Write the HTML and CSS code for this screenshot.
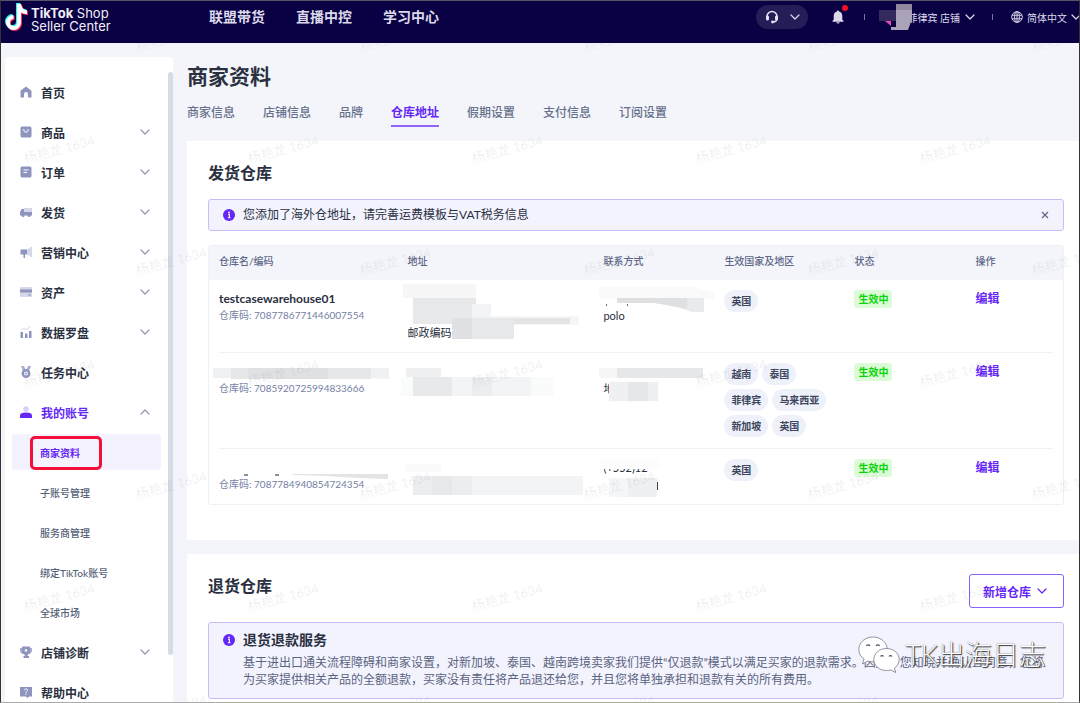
FILE: index.html
```
<!DOCTYPE html>
<html lang="zh-CN">
<head>
    <meta charset="UTF-8">
    <meta name="viewport" content="width=device-width, initial-scale=1.0">
    <title>TikTok Shop Seller Center</title>
    <link rel="stylesheet" href="styles.css">
</head>
<body>

<!-- 图标 -->
<svg class="sprite" aria-hidden="true">
    <symbol id="down" viewBox="0 0 10 10"><path d="M1 3l4 4 4-4" fill="none" stroke="currentColor" stroke-width="1.2" stroke-linecap="round" stroke-linejoin="round"/></symbol>
    <symbol id="up" viewBox="0 0 10 10"><path d="M1 7l4-4 4 4" fill="none" stroke="currentColor" stroke-width="1.2" stroke-linecap="round" stroke-linejoin="round"/></symbol>
    <symbol id="info" viewBox="0 0 12 12"><circle cx="6" cy="6" r="6" fill="#6527f5"/><circle cx="6" cy="3.4" r=".9" fill="#fff"/><path d="M5 5.3h1.4v3.4M4.8 8.8h2.7" fill="none" stroke="#fff" stroke-width="1.1"/></symbol>
    <symbol id="tune" viewBox="0 0 24 30"><path d="M14 1v18.5a5.500 5.500 0 1 1-5.500-5.500M14 1c.5 5 3.500 8 8 8.200" fill="none" stroke="currentColor" stroke-width="4"/></symbol>
</svg>

<header class="topbar">
    <a class="logo" href="#">
        <svg class="note" viewBox="0 0 24 30" aria-hidden="true">
            <use href="#tune" x="-1" y="-1" width="24" height="30" color="#25f4ee"/>
            <use href="#tune" x="1" y="1" width="24" height="30" color="#fe2c55"/>
            <use href="#tune" width="24" height="30" color="#fff"/>
        </svg>
        <span><b>TikTok</b> Shop<br>Seller Center</span>
    </a>
    <nav class="topnav">
        <a href="#">联盟带货</a>
        <a href="#">直播中控</a>
        <a href="#">学习中心</a>
    </nav>
    <div class="tools">
        <button class="support" aria-label="客服">
            <svg width="14" height="14" viewBox="0 0 14 14"><path d="M2 8V6.500a5 5 0 0 1 10 0V8c0 2.500-1.500 4-4 4" fill="none" stroke="#e6e4f3" stroke-width="1.500"/><rect x="1" y="5.800" width="3" height="4.600" rx="1.300" fill="#e6e4f3"/><rect x="10" y="5.800" width="3" height="4.600" rx="1.300" fill="#e6e4f3"/><circle cx="7.500" cy="12" r="1.400" fill="#e6e4f3"/></svg>
            <svg class="chevron"><use href="#down"/></svg>
        </button>
        <button class="bell" aria-label="通知">
            <svg width="12" height="14" viewBox="0 0 12 14"><path d="M6 .5c.7 0 1 .4 1 1C9 2 10.300 3.500 10.300 6v3.500L11.500 11v.7H.5V11l1.200-1.500V6C1.700 3.500 3 2 5 1.500c0-.6.3-1 1-1zM4.300 12.300h3.400a1.700 1.200 0 0 1-3.400 0z" fill="#dcdaea"/></svg>
            <i class="dot"></i>
        </button>
        <i class="line"></i>
        <button class="shop">
            <svg class="avatar" width="34" height="28" viewBox="0 0 34 28" aria-hidden="true"><path d="M0 7h17v11H0z" fill="#332a5e"/><path d="M6 18h6v5z" fill="#e34bb5"/><path d="M17 1h16v15l-4 11H12v-3h5z" fill="#aaa3b9"/><path d="M17 1h16v6H17z" fill="#92899e"/></svg>
            菲律宾 店铺
            <svg class="chevron"><use href="#down"/></svg>
        </button>
        <i class="line"></i>
        <button class="lang">
            <svg width="12" height="12" viewBox="0 0 12 12"><g fill="none" stroke="#d5d2e6"><circle cx="6" cy="6" r="5.300"/><ellipse cx="6" cy="6" rx="2.400" ry="5.300"/><path d="M1 4.200h10M1 7.800h10M6 .7v10.600"/></g></svg>
            简体中文
            <svg class="chevron"><use href="#down"/></svg>
        </button>
    </div>
</header>

<div class="page">
    <!-- 侧边栏 -->
    <aside class="sidebar">
        <nav>
            <a class="item" href="#"><svg class="icon" viewBox="0 0 12 12"><path d="M6 .5l5.500 4.300V11.500H8V8a2 2 0 0 0-4 0v3.500H.5V4.800z" fill="#8f94bf"/></svg>首页</a>
            <a class="item" href="#"><svg class="icon" viewBox="0 0 12 12"><rect x=".5" y=".5" width="11" height="11" rx="1.500" fill="#8f94bf"/><path d="M3.800 3v1a2.200 2.200 0 0 0 4.400 0V3" fill="none" stroke="#fff"/></svg>商品<svg class="chevron"><use href="#down"/></svg></a>
            <a class="item" href="#"><svg class="icon" viewBox="0 0 12 12"><rect x=".5" y=".5" width="11" height="11" rx="1.500" fill="#8f94bf"/><path d="M3.500 4h5M3.500 6.500h3.500" stroke="#fff"/></svg>订单<svg class="chevron"><use href="#down"/></svg></a>
            <a class="item" href="#"><svg class="icon" viewBox="0 0 12 12"><path d="M4 2h8v5H4z" fill="#d4d8e9"/><path d="M0 6l1.500-3H4v3h8v3.500H0z" fill="#8f94bf"/><circle cx="3" cy="9.500" r="1.500" fill="#8f94bf"/><circle cx="9" cy="9.500" r="1.500" fill="#8f94bf"/></svg>发货<svg class="chevron"><use href="#down"/></svg></a>
            <a class="item" href="#"><svg class="icon" viewBox="0 0 12 12"><path d="M7 3.500L12 .5v11l-5-3z" fill="#d4d8e9"/><path d="M.5 3.500H7v5H5V12H3.500V8.500h-3z" fill="#8f94bf"/></svg>营销中心<svg class="chevron"><use href="#down"/></svg></a>
            <a class="item" href="#"><svg class="icon" viewBox="0 0 12 12"><rect y="1" width="12" height="10" rx="1" fill="#d4d8e9"/><path d="M0 3.500h12v3H0zM8 8.500h3v1H8z" fill="#8f94bf"/></svg>资产<svg class="chevron"><use href="#down"/></svg></a>
            <a class="item" href="#"><svg class="icon" viewBox="0 0 12 12"><path d="M.5 6H3v6H.5zM5 7.500h2.500V12H5zM9 5h2.500v7H9z" fill="#8f94bf"/><path d="M1 4l3-1.500 2.500 1L10.500.8" fill="none" stroke="#d4d8e9"/></svg>数据罗盘<svg class="chevron"><use href="#down"/></svg></a>
            <a class="item" href="#"><svg class="icon" viewBox="0 0 12 12"><path d="M1 0h3l1.500 3.500h1L8 0h3L9 5H3z" fill="#a9aed0"/><circle cx="6" cy="7.500" r="3.200" fill="none" stroke="#8f94bf" stroke-width="2.500"/><circle cx="6" cy="7.500" r="1" fill="#8f94bf"/></svg>任务中心</a>
            <a class="item open" href="#"><svg class="icon" viewBox="0 0 12 12"><circle cx="6" cy="3" r="2.800" fill="#d9cffb"/><path d="M0 12V9.500C0 7.500 2 6.500 6 6.500s6 1 6 3V12z" fill="#6527f5"/></svg>我的账号<svg class="chevron"><use href="#up"/></svg></a>
            <a class="sub active" href="#">商家资料<i class="mark"></i></a>
            <a class="sub" href="#">子账号管理</a>
            <a class="sub" href="#">服务商管理</a>
            <a class="sub" href="#">绑定TikTok账号</a>
            <a class="sub" href="#">全球市场</a>
            <a class="item" href="#"><svg class="icon" viewBox="0 0 12 12"><path d="M0 2h12v3.500L10 8H2L0 5.500z" fill="#a9aed0"/><path d="M2 .5h8v6L7.500 9v1H9v2H3.500v-2h1.300V9L2 6.500z" fill="#8f94bf"/><circle cx="6" cy="4.500" r="1.400" fill="#e8eaf4"/></svg>店铺诊断<svg class="chevron"><use href="#down"/></svg></a>
            <a class="item" href="#"><svg class="icon" viewBox="0 0 12 12"><path d="M0 1h12v9.500H9L7.500 12 6 10.500H0z" fill="#8f94bf"/><path d="M4.500 4.300c0-2 3-2 3 0 0 1.200-1.500 1-1.500 2.400M6 7.600v1.200" fill="none" stroke="#fff"/></svg>帮助中心</a>
        </nav>
        <div class="scrollbar"></div>
    </aside>

    <main>
        <h1>商家资料</h1>
        <nav class="tabs">
            <a href="#">商家信息</a>
            <a href="#">店铺信息</a>
            <a href="#">品牌</a>
            <a class="active" href="#">仓库地址</a>
            <a href="#">假期设置</a>
            <a href="#">支付信息</a>
            <a href="#">订阅设置</a>
        </nav>

        <!-- 发货仓库 -->
        <section class="card">
            <h2>发货仓库</h2>
            <div class="notice">
                <svg class="info"><use href="#info"/></svg>
                <p>您添加了海外仓地址，请完善运费模板与VAT税务信息</p>
                <button class="close" aria-label="关闭"><svg width="8" height="8" viewBox="0 0 8 8"><path d="M1 1l6 6M7 1L1 7" stroke="#5d6484" stroke-width="1.200"/></svg></button>
            </div>
            <div class="table-box">
                <table>
                    <thead>
                        <tr>
                            <th class="c-name">仓库名/编码</th>
                            <th class="c-addr">地址</th>
                            <th class="c-contact">联系方式</th>
                            <th class="c-area">生效国家及地区</th>
                            <th class="c-state">状态</th>
                            <th>操作</th>
                        </tr>
                    </thead>
                    <tbody>
                        <tr>
                            <td><strong>testcasewarehouse01</strong><small>仓库码: 7087786771446007554</small></td>
                            <td><br><br>邮政编码</td>
                            <td><br>polo</td>
                            <td><div class="tags"><span>英国</span></div></td>
                            <td><span class="state">生效中</span></td>
                            <td><a class="edit" href="#">编辑</a></td>
                        </tr>
                        <tr>
                            <td><strong>&nbsp;</strong><small>仓库码: 7085920725994833666</small></td>
                            <td></td>
                            <td><br>地</td>
                            <td><div class="tags"><span>越南</span><span>泰国</span><span>菲律宾</span><span>马来西亚</span><span>新加坡</span><span>英国</span></div></td>
                            <td><span class="state">生效中</span></td>
                            <td><a class="edit" href="#">编辑</a></td>
                        </tr>
                        <tr>
                            <td><strong>&nbsp;</strong><small>仓库码: 7087784940854724354</small></td>
                            <td></td>
                            <td>(+552)12</td>
                            <td><div class="tags"><span>英国</span></div></td>
                            <td><span class="state">生效中</span></td>
                            <td><a class="edit" href="#">编辑</a></td>
                        </tr>
                    </tbody>
                </table>
                <!-- 隐私信息打码 -->
                <svg class="mosaic" width="520" height="260" viewBox="0 0 520 260" aria-hidden="true">
                    <path d="M194 38h73v14h-73z" fill="#f7f7f8"/>
                    <path d="M204 52h63v6h-63z" fill="#e6e7e8"/>
                    <path d="M204 58h78v14h-78z" fill="#f2f3f4"/>
                    <path d="M204 58h59v20h-59z" fill="#e8e9ea"/>
                    <path d="M282 70h88v9h-88z" fill="#f5f6f6"/>
                    <path d="M263 72h98v6h-98z" fill="#e3e4e5"/>
                    <path d="M243 72h62v21h-62z" fill="#e6e8e9"/>
                    <path d="M243 72h20v21h-20z" fill="#dfe1e3"/>
                    <path d="M390 41h95l20 6v6H390z" fill="#fafafb"/>
                    <path d="M408 52h87v14h-12l-15-5-22-4h-38z" fill="#e9eaeb"/>
                    <path d="M408 52h70v11l-10-2-22-4h-38z" fill="#dfe0e2"/>
                    <path d="M397 58h1v2h-1zM418 58h1v2h-1z" fill="#6b7080"/>
                    <path d="M4 122h176v11l-20-1H4z" fill="#f0f1f2"/>
                    <path d="M22 122h140v11H22z" fill="#e6e7e9"/>
                    <path d="M39 122h80v11H39z" fill="#e0e1e3"/>
                    <path d="M197 122h35v9h-35z" fill="#eff0f1"/>
                    <path d="M192 131h153v19H192z" fill="#fafbfb"/>
                    <path d="M204 131h118v19H204z" fill="#f3f4f5"/>
                    <path d="M204 131h39v19h-39z" fill="#e8e9eb"/>
                    <path d="M263 131h20v19h-20z" fill="#ebedee"/>
                    <path d="M390 122h18v10h-18z" fill="#f7f7f8"/>
                    <path d="M408 122h86v10h-86z" fill="#e6e7e9"/>
                    <path d="M400 133h50v23h-50z" fill="#fdfdfe"/>
                    <path d="M400 136h49v19h-49z" fill="#eff0f2"/>
                    <path d="M419 136h20v19h-20z" fill="#e6e7e9"/>
                    <path d="M84 228h95v5l-30-1-32-2-33-1z" fill="#e3e4e6"/>
                    <path d="M35 228h4v2h-4zM66 228h4v2h-4z" fill="#8a8f9d"/>
                    <path d="M196 218h36v8h-36z" fill="#fafafb"/>
                    <path d="M204 230h170v19H204z" fill="#f3f4f5"/>
                    <path d="M204 230h59v19h-59z" fill="#ebedef"/>
                    <path d="M223 230h20v19h-20z" fill="#e6e8ea"/>
                    <path d="M392 212h60v11h-60z" fill="#fdfdfe"/>
                    <path d="M400 232h48v19h-48z" fill="#f5f6f7"/>
                    <path d="M419 232h29v19h-29z" fill="#eff0f1"/>
                    <path d="M448 236h1v8h-1z" fill="#3d4252"/>
                </svg>
            </div>
        </section>

        <!-- 退货仓库 -->
        <section class="card">
            <div class="card-head">
                <h2>退货仓库</h2>
                <button class="add">新增仓库<svg class="chevron"><use href="#down"/></svg></button>
            </div>
            <div class="notice tall">
                <svg class="info"><use href="#info"/></svg>
                <div>
                    <h3>退货退款服务</h3>
                    <p>基于进出口通关流程障碍和商家设置，对新加坡、泰国、越南跨境卖家我们提供“仅退款”模式以满足买家的退款需求。因此，您知晓并确认且同意，您将为买家提供相关产品的全额退款，买家没有责任将产品退还给您，并且您将单独承担和退款有关的所有费用。</p>
                </div>
            </div>
        </section>
    </main>
</div>

<!-- 水印 -->
<div class="watermark" aria-hidden="true">
    <div class="odd"><span>杨艳龙 1634</span><span>杨艳龙 1634</span><span>杨艳龙 1634</span><span>杨艳龙 1634</span><span>杨艳龙 1634</span></div>
    <div><span>杨艳龙 1634</span><span>杨艳龙 1634</span><span>杨艳龙 1634</span><span>杨艳龙 1634</span><span>杨艳龙 1634</span></div>
    <div class="odd"><span>杨艳龙 1634</span><span>杨艳龙 1634</span><span>杨艳龙 1634</span><span>杨艳龙 1634</span><span>杨艳龙 1634</span></div>
    <div><span>杨艳龙 1634</span><span>杨艳龙 1634</span><span>杨艳龙 1634</span><span>杨艳龙 1634</span><span>杨艳龙 1634</span></div>
    <div class="odd"><span>杨艳龙 1634</span><span>杨艳龙 1634</span><span>杨艳龙 1634</span><span>杨艳龙 1634</span><span>杨艳龙 1634</span></div>
    <div><span>杨艳龙 1634</span><span>杨艳龙 1634</span><span>杨艳龙 1634</span><span>杨艳龙 1634</span><span>杨艳龙 1634</span></div>
    <div class="odd"><span>杨艳龙 1634</span><span>杨艳龙 1634</span><span>杨艳龙 1634</span><span>杨艳龙 1634</span><span>杨艳龙 1634</span></div>
</div>

<div class="account">
    <svg width="42" height="38" viewBox="0 0 42 38" aria-hidden="true">
        <g fill="#fff" stroke="#777b88" stroke-width=".8">
            <path d="M15 1C7 1 .8 6.500.8 13.500c0 4 2 7.200 5.200 9.500l-1.500 5 5.500-3c1.500.5 3.200.8 5 .8 8 0 14.200-5.300 14.200-12.300S23 1 15 1z"/>
            <path d="M28.500 12.500c-7.200 0-12.700 4.800-12.700 11s5.500 11 12.700 11c1.600 0 3-.2 4.300-.6l5 2.700-1.400-4.400c2.900-2 4.800-5.200 4.800-8.700 0-6.200-5.500-11-12.700-11z"/>
        </g>
        <g fill="none" stroke="#555a68" stroke-width="1.200"><path d="M8.500 10a2 2 0 0 1 3.600 0M18 10a2 2 0 0 1 3.600 0M22.500 20.500a1.700 1.700 0 0 1 3 0M31 20.500a1.700 1.700 0 0 1 3 0"/></g>
    </svg>
    <span>TK出海日志</span>
</div>

</body>
</html>
```
FILE: styles.css
```
* {
    box-sizing: border-box;
}
body {
    display: flex;
    flex-direction: column;
    position: relative;
    height: 100vh;
    margin: 0;
    overflow: hidden;
    border: 1px solid #333;
    border-top-color: #55556a;
    border-bottom-color: #aaa;
    background: #f4f5fa;
    color: #2a3040;
    font-family: Lato, "Noto Sans CJK SC", sans-serif;
    font-size: 12px;
}
h1, h2, h3, p {
    margin: 0;
}
a {
    color: inherit;
    text-decoration: none;
}
button {
    display: flex;
    align-items: center;
    padding: 0;
    border: none;
    background: none;
    color: inherit;
    font: inherit;
    cursor: pointer;
}
.sprite {
    display: none;
}
.chevron {
    flex: none;
    width: 10px;
    height: 10px;
}

/* 顶部导航 */
.topbar {
    display: flex;
    flex: none;
    height: 42px;
    padding-left: 4px;
    background: #0a0044;
    color: #dcdaea;
}
.logo {
    display: flex;
    flex: none;
    gap: 2px;
    width: 204px;
    padding-top: 2px;
    color: #f0eff6;
    font-family: Inter, sans-serif;
    font-size: 13px;
    line-height: 13px;
}
.logo span {
    padding-top: 4px;
}
.note {
    width: 24px;
    height: 30px;
    overflow: visible;
}
.topnav {
    display: flex;
    gap: 31px;
    font-size: 14px;
    font-weight: 700;
    line-height: 32px;
}
.tools {
    display: flex;
    align-items: center;
    height: 32px;
    margin-left: auto;
    font-size: 10px;
    white-space: nowrap;
}
.support {
    gap: 11px;
    height: 24px;
    margin-right: 24px;
    padding: 0 8px 0 9px;
    border-radius: 12px;
    background: #251d58;
}
.bell {
    position: relative;
    margin-right: 20px;
}
.dot {
    position: absolute;
    top: -5px;
    right: -4px;
    width: 6px;
    height: 6px;
    border-radius: 50%;
    background: #f01022;
}
.line {
    width: 1px;
    height: 6px;
    background: #7a7599;
}
.shop {
    position: relative;
    gap: 5px;
    margin: 0 17px 0 42px;
}
.avatar {
    position: absolute;
    top: -7px;
    left: -28px;
}
.lang {
    gap: 4px;
    margin-left: 18px;
}
.lang .chevron {
    margin-right: -2px;
}

.page {
    display: flex;
    flex: 1;
    gap: 14px;
    min-height: 0;
    padding-left: 4px;
}

/* 侧边栏 */
.sidebar {
    display: flex;
    flex: none;
    width: 168px;
    margin-top: 14px;
    padding-top: 15px;
    border-radius: 4px 4px 0 0;
    background: #fff;
}
.sidebar nav {
    flex: 1;
    padding: 0 7px;
}
.item, .sub {
    display: flex;
    align-items: center;
    height: 40px;
}
.item {
    padding: 0 11px 0 8px;
    font-weight: 700;
}
.icon {
    width: 12px;
    height: 12px;
    margin-right: 9px;
}
.item .chevron {
    margin-left: auto;
    color: #8f98b3;
}
.item.open {
    color: #6527f5;
}
.sub {
    position: relative;
    height: 36px;
    margin: 2px 0;
    padding-left: 28px;
    border-radius: 3px;
    color: #565f78;
    font-size: 10px;
    font-weight: 500;
}
.sub.active {
    background: #f3f2fd;
    color: #6527f5;
    font-weight: 700;
}
.sub + .sub {
    margin-top: 4px;
}
.mark {
    position: absolute;
    top: 2px;
    left: 18px;
    width: 72px;
    height: 34px;
    border: 3px solid #f5103c;
    border-radius: 5px;
}
.scrollbar {
    width: 5px;
    height: 583px;
    border-radius: 3px;
    background: #d5dce7;
}

/* 内容 */
main {
    flex: 1;
    min-width: 0;
    padding-top: 19px;
}
h1 {
    font-size: 21px;
    font-weight: 700;
    line-height: 28px;
}
.tabs {
    display: flex;
    gap: 28px;
    margin: 11px 0 14px;
    color: #66708c;
    font-weight: 500;
    line-height: 24px;
}
.tabs a {
    border-bottom: 2px solid transparent;
}
.tabs .active {
    border-color: #9065f7;
    color: #6527f5;
    font-weight: 700;
}
.card {
    margin-bottom: 14px;
    padding: 20px 15px 35px 21px;
    background: #fff;
}
h2 {
    font-size: 16px;
    font-weight: 700;
    line-height: 24px;
}
.card-head {
    display: flex;
    align-items: flex-start;
    justify-content: space-between;
}
.add {
    gap: 6px;
    height: 34px;
    padding: 0 16px 0 13px;
    border: 1px solid #8c62f6;
    border-radius: 3px;
    color: #6527f5;
    font-weight: 700;
}
.notice {
    display: flex;
    align-items: center;
    gap: 8px;
    margin-top: 14px;
    padding: 6px 14px;
    border: 1px solid #c8bdfa;
    border-radius: 3px;
    background: #f3f3fe;
    line-height: 18px;
}
.info {
    flex: none;
    width: 12px;
    height: 12px;
}
.close {
    margin-left: auto;
}
.tall {
    align-items: flex-start;
    padding: 7px 10px 10px 14px;
}
.tall .info {
    margin-top: 4px;
}
.tall p {
    margin-top: 4px;
    color: #5a6380;
    line-height: 17px;
}
h3 {
    font-size: 14px;
    font-weight: 700;
    line-height: 20px;
}

/* 仓库列表 */
.table-box {
    position: relative;
    margin-top: 14px;
    padding: 0 10px;
    overflow: hidden;
    border: 1px solid #edf1f8;
    border-radius: 3px;
}
table {
    width: 100%;
    border-collapse: collapse;
    table-layout: fixed;
    line-height: 17px;
}
th {
    height: 34px;
    padding: 0 0 3px;
    background: #f4f5fa;
    color: #5d6787;
    font-size: 10px;
    font-weight: 500;
    text-align: left;
}
th:first-child {
    box-shadow: -10px 0 #f4f5fa;
}
th:last-child {
    box-shadow: 10px 0 #f4f5fa;
}
.c-name {
    width: 22.6%;
}
.c-addr {
    width: 23.5%;
}
.c-contact {
    width: 14.5%;
}
.c-area {
    width: 15.6%;
}
.c-state {
    width: 14.5%;
}
td {
    padding: 10px 0 11px;
    border-bottom: 1px solid #edf1f8;
    font-size: 11px;
    vertical-align: top;
}
tr:last-child td {
    border-bottom: none;
}
td strong, td small {
    display: block;
}
td strong {
    font-size: 12px;
}
td small {
    color: #7580a3;
    font-size: 10px;
}
.tags {
    display: flex;
    flex-wrap: wrap;
    gap: 4px;
    padding-right: 18px;
}
.tags span {
    padding: 0 7px;
    border-radius: 11px;
    background: #eef1fa;
    color: #3f475e;
    font-size: 10px;
    font-weight: 700;
    line-height: 22px;
}
.state {
    display: inline-block;
    padding: 0 4px;
    border-radius: 3px;
    background: #dcfcd8;
    color: #06d406;
    font-size: 10px;
    font-weight: 700;
    line-height: 18px;
}
.edit {
    color: #6527f5;
    font-size: 12px;
    font-weight: 700;
}
.mosaic {
    position: absolute;
    top: 0;
    left: 0;
}

/* 水印 */
.watermark {
    position: absolute;
    top: 42px;
    right: 0;
    bottom: 0;
    left: 0;
    overflow: hidden;
    color: rgba(60, 60, 80, 0.09);
    font-size: 13px;
    pointer-events: none;
}
.watermark div {
    display: flex;
    align-items: center;
    height: 112px;
    margin-left: -54px;
}
.watermark .odd {
    margin-left: 58px;
}
.watermark div:first-child {
    margin-top: -63px;
}
.watermark span {
    flex: none;
    width: 224px;
    text-align: center;
    transform: rotate(-15deg);
}

/* 公众号 */
.account {
    display: flex;
    align-items: center;
    gap: 5px;
    position: absolute;
    right: 33px;
    bottom: 28px;
    color: #fff;
    font-size: 27px;
    font-weight: 300;
    line-height: 38px;
    text-shadow: 1px 1px 1px #333, 0 0 1px #555;
}
.account svg {
    flex: none;
}
```
